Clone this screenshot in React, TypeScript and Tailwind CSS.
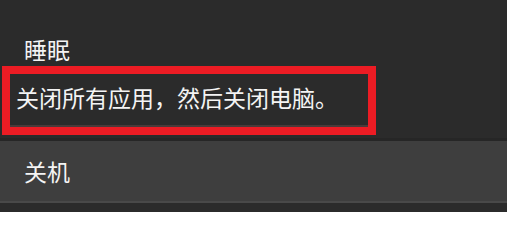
const cjk = "font-['Microsoft_YaHei','Noto_Sans_CJK_SC',sans-serif]";

export default function App() {
  return (
    <div className={`flex h-[212px] w-[507px] flex-col bg-[#2b2b2b] text-[#f4f4f4] ${cjk}`}>
      {/* 睡眠 */}
      <div className="mt-[34px] flex h-[30px] items-center pl-[24px] text-[23px]">睡眠</div>

      {/* highlighted description */}
      <div className="ml-[2px] mt-[2px] h-[69px] w-[374px] border-[8px] border-[#ec1c24]">
        <div className="flex h-full flex-col justify-between">
          <div className="pl-[6px] pt-[8px] text-[23px] leading-[30px]">
            关闭所有应用，然后关闭电脑。
          </div>
          <div className="h-[2px] bg-[#4a3a3a]" />
        </div>
      </div>

      <div className="mt-[3px] h-[3px] bg-[#262626]" />

      {/* 关机 */}
      <div className="flex h-[60px] items-center bg-[#3e3e3e] pl-[24px] text-[23px]">关机</div>
      <div className="h-[2px] bg-[#494949]" />
      <div className="flex-1 bg-[#2b2b2b]" />
    </div>
  );
}
